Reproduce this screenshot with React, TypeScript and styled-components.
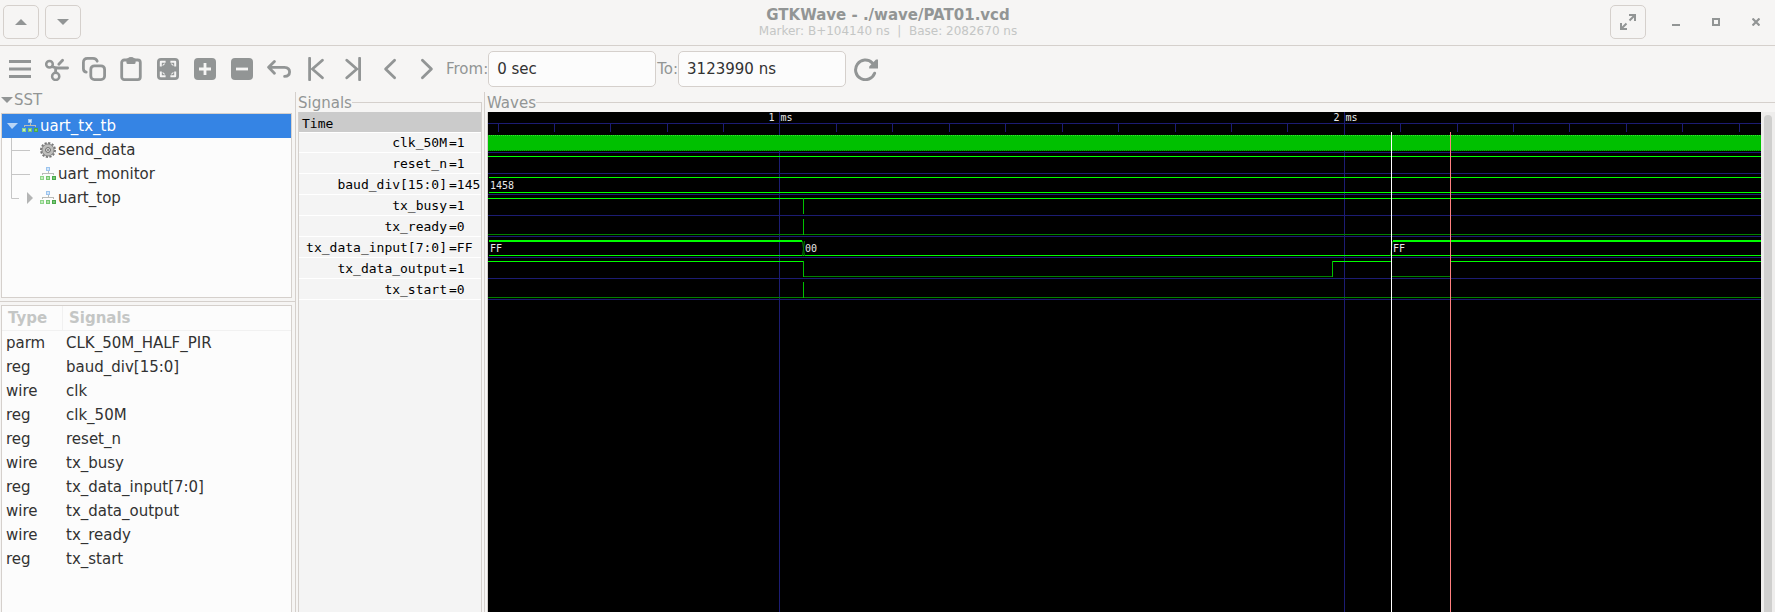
import React from "react";
import styled, { createGlobalStyle } from "styled-components";

const color = {
  bg: "#f6f5f4",
  base: "#fcfcfc",
  border: "#d5d0cc",
  muted: "#929595",
  faint: "#c4c6c5",
  text: "#323232",
  select: "#3584e4",
  navy: "#1c1c73",
  high: "#00ff00",
  edge: "#00c000",
  low: "#008000",
};

const GlobalStyle = createGlobalStyle`
  * { box-sizing: border-box; }
  body {
    margin: 0;
    background: ${color.bg};
    color: ${color.text};
    font: 15px/24px "DejaVu Sans", sans-serif;
  }
  button, input { font: inherit; }
`;

const Window = styled.div`
  min-height: 100vh;
  display: flex;
  flex-direction: column;
`;

/* ---------- title bar ---------- */

const TitleBar = styled.header`
  display: grid;
  grid-template-columns: 1fr auto 1fr;
  align-items: center;
  height: 46px;
  padding: 0 2px 1px 3px;
  border-bottom: 1px solid ${color.border};
`;

const TitleSide = styled.div<{ $end?: boolean }>`
  display: flex;
  align-items: center;
  gap: 6px;
  justify-content: ${(p) => (p.$end ? "flex-end" : "flex-start")};
`;

const Titles = styled.div`
  text-align: center;
  color: ${color.faint};
  font-size: 12px;
  line-height: 14px;
`;

const Title = styled.h1`
  margin: 0;
  color: ${color.muted};
  font-size: 15px;
  line-height: 18px;
`;

const FramedButton = styled.button`
  display: grid;
  place-items: center;
  width: 36px;
  height: 34px;
  padding: 0;
  border: 1px solid ${color.border};
  border-radius: 5px;
  background: none;
  color: ${color.muted};
`;

const WindowButton = styled(FramedButton)`
  width: 34px;
  border-color: transparent;
`;

const WindowButtons = styled.div`
  display: flex;
  gap: 6px;
  padding: 0 0 0 7px;
`;

/* ---------- tool bar ---------- */

const ToolBar = styled.div`
  display: flex;
  align-items: center;
  height: 46px;
  padding: 0 8px;
  color: ${color.muted};
`;

const ToolGroup = styled.div`
  display: flex;
  gap: 13px;
  margin-right: 7px;
`;

const ToolButton = styled.button`
  display: block;
  width: 24px;
  height: 24px;
  padding: 0;
  border: 0;
  background: none;
  color: ${color.muted};
`;

const Field = styled.label`
  display: flex;
  align-items: center;
  margin-right: 1px;
`;

const Entry = styled.input`
  width: 168px;
  height: 36px;
  padding: 0 8px;
  border: 1px solid ${color.border};
  border-radius: 5px;
  background: ${color.base};
  color: ${color.text};
  outline: none;
`;

const Reload = styled(ToolButton)`
  margin-left: 7px;
`;

/* ---------- panes ---------- */

const Panes = styled.main`
  flex: 1;
  display: flex;
  align-items: stretch;
`;

const Divider = styled.div<{ $across?: boolean }>`
  flex: none;
  background: ${color.border};
  ${(p) => (p.$across ? "height: 1px; margin: 3px 0;" : "width: 1px;")}
`;

const SidePane = styled.div`
  flex: none;
  width: 295px;
  display: flex;
  flex-direction: column;
`;

const SstToggle = styled.button`
  display: flex;
  align-items: center;
  gap: 1px;
  height: 21px;
  padding: 0 0 5px 1px;
  border: 0;
  background: none;
  color: ${color.muted};
`;

const Box = styled.div<{ $grow?: boolean }>`
  margin: 0 3px 0 1px;
  border: 1px solid ${color.border};
  background: ${color.base};
  ${(p) => (p.$grow ? "flex: 1; border-bottom: 0;" : "height: 185px;")}
`;

const TreeList = styled.ul`
  margin: 0;
  padding: 0;
  list-style: none;
`;

const TreeItem = styled.li<{ $selected?: boolean }>`
  display: flex;
  align-items: center;
  height: 24px;
  gap: 2px;
  background: ${(p) => (p.$selected ? color.select : "none")};
  color: ${(p) => (p.$selected ? "#fff" : color.text)};
`;

const SignalTable = styled.table`
  width: 100%;
  border-spacing: 0;
  table-layout: fixed;
`;

const HeadCell = styled.th<{ $width?: number }>`
  width: ${(p) => (p.$width ? `${p.$width}px` : "auto")};
  height: 25px;
  padding: 0 6px;
  border-bottom: 1px solid #f1f1f1;
  color: ${color.faint};
  text-align: left;
  & + & { border-left: 1px solid #f1f1f1; }
`;

const Cell = styled.td`
  height: 24px;
  padding: 0 4px;
`;

const Frame = styled.section<{ $width?: number }>`
  display: flex;
  flex-direction: column;
  margin: 0 2px;
  ${(p) => (p.$width ? `flex: none; width: ${p.$width}px;` : "flex: 1; min-width: 0; margin-right: 0;")}
`;

const FrameHead = styled.div`
  display: flex;
  align-items: flex-end;
  height: 20px;
  color: ${color.muted};
`;

const FrameTitle = styled.h2`
  margin: 0;
  font-size: 15px;
  font-weight: 400;
  line-height: 18px;
`;

const Rule = styled.div<{ $corner?: boolean }>`
  flex: 1;
  height: 10px;
  border-top: 1px solid ${color.border};
  border-right: ${(p) => (p.$corner ? `1px solid ${color.border}` : "0")};
`;

const SignalsBody = styled.div`
  flex: 1;
  border: solid ${color.border};
  border-width: 0 1px;
  background: #f4f4f4;
  color: #000;
  font: 13px/22px "DejaVu Sans Mono", monospace;
`;

const TimeRow = styled.div`
  height: 20px;
  padding: 0 3px;
  background: #cbcbcb;
  line-height: 24px;
`;

const SignalRows = styled.div`
  box-shadow: inset 0 1px #fff;
`;

const SignalRow = styled.div`
  display: grid;
  grid-template-columns: 148px 1fr;
  gap: 2px;
  height: 21px;
  overflow: hidden;
  border-bottom: 1px solid #fff;
  white-space: nowrap;
`;

const SignalName = styled.span`
  text-align: right;
`;

const WavesBody = styled.div`
  flex: 1;
  display: flex;
  border-left: 1px solid ${color.border};
`;

const WaveView = styled.div`
  flex: 1;
  min-width: 0;
  position: relative;
  background: #000;
`;

const WaveSvg = styled.svg`
  position: absolute;
  inset: 0;
  width: 100%;
  height: 100%;
  font: 10px "DejaVu Sans Mono", monospace;
`;

const ScrollTrack = styled.div`
  width: 14px;
  display: flex;
  padding: 3px 3px 0;
  background: #eeedec;
`;

const ScrollThumb = styled.div`
  flex: 1;
  border-radius: 4px 4px 0 0;
  background: #cfcfce;
`;

/* ---------- icons ---------- */

const Svg24 = ({ children }: { children: React.ReactNode }) => (
  <svg width="24" height="24" viewBox="0 0 24 24" fill="none" stroke="currentColor" strokeWidth="2.8" strokeLinecap="round" strokeLinejoin="round" display="block">
    {children}
  </svg>
);

const icons: [string, React.ReactNode][] = [
  ["Menu", <path d="M1 4.5H23M1 12H23M1 19.5H23" strokeLinecap="butt" />],
  [
    "Cut",
    <g strokeWidth="2.5">
      <circle cx="4.5" cy="7.3" r="3.3" />
      <circle cx="10.7" cy="19.4" r="3.6" />
      <path d="M7.5 9.8Q10 11 13 11H22.6M10.6 15.6V12.5M13.8 7.2L17.6 3.2" strokeWidth="2.8" />
    </g>,
  ],
  [
    "Copy",
    <>
      <rect x="8.8" y="8.8" width="13.8" height="13.8" rx="3.6" />
      <path d="M4.2 15.2Q1.4 14.6 1.4 11.5V5.4Q1.4 1.4 5.4 1.4H11Q14.4 1.4 15.2 4.2" />
    </>,
  ],
  [
    "Paste",
    <>
      <rect x="2.7" y="3" width="18.6" height="19.6" rx="2.6" />
      <path d="M7.4 2.2Q7.4 1.2 9 1.2Q9.6 0 12 0Q14.4 0 15 1.2Q16.6 1.2 16.6 2.2V5.4Q16.6 7 15 7H9Q7.4 7 7.4 5.4Z" fill="currentColor" stroke="none" />
    </>,
  ],
  [
    "Zoom fit",
    <>
      <rect x="1" y="1" width="22" height="22" rx="4" fill="currentColor" stroke="none" />
      <path
        d="M4.8 9.6V4.8H9.6M14.4 4.8H19.2V9.6M19.2 14.4V19.2H14.4M9.6 19.2H4.8V14.4"
        stroke={color.bg}
        strokeWidth="2"
        strokeLinecap="butt"
      />
      <path d="M6 8.6L8.6 6V7.4L7.4 8.6ZM18 8.6L15.4 6V7.4L16.6 8.6ZM6 15.4L8.6 18V16.6L7.4 15.4ZM18 15.4L15.4 18V16.6L16.6 15.4Z" fill={color.bg} stroke="none" />
    </>,
  ],
  [
    "Zoom in",
    <>
      <rect x="1" y="1" width="22" height="22" rx="4" fill="currentColor" stroke="none" />
      <path d="M12 6V18M6 12H18" stroke={color.bg} strokeLinecap="butt" />
    </>,
  ],
  [
    "Zoom out",
    <>
      <rect x="1" y="1" width="22" height="22" rx="4" fill="currentColor" stroke="none" />
      <path d="M6 12H18" stroke={color.bg} strokeLinecap="butt" />
    </>,
  ],
  ["Undo", <path d="M7.4 4.4L1.6 10.3L7.4 16.2M2 10.3H17.5Q22.6 10.6 22.6 15Q22.4 19.4 17.6 19.4" />],
  ["To start", <path d="M5.6 1.2V22.8M18.4 3.2L8.4 12L18.4 20.8" />],
  ["To end", <path d="M18.6 1.2V22.8M5.8 3.2L15.8 12L5.8 20.8" />],
  ["Back", <path d="M16.6 3.2L7.6 12L16.6 20.8" />],
  ["Forward", <path d="M7.4 3.2L16.4 12L7.4 20.8" />],
];

const ReloadIcon = () => (
  <Svg24>
    <path d="M18.2 5.8A9.8 9.8 0 1 0 20.6 16.2" strokeWidth="3" />
    <path d="M24 2.6V11.6H15.2V9.6L22 2.6Z" fill="currentColor" stroke="none" />
  </Svg24>
);

const Triangle = ({ d, fill = color.muted, w = 12, h = 6 }: { d: string; fill?: string; w?: number; h?: number }) => (
  <svg width={w} height={h} viewBox={`0 0 ${w} ${h}`} display="block">
    <path d={d} fill={fill} />
  </svg>
);

const ModuleIcon = () => (
  <svg width="16" height="16" viewBox="0 0 16 16" shapeRendering="crispEdges">
    <path d="M8 5V7M2.5 9V7.5H13.5V9" fill="none" stroke="#b9bbb8" />
    <rect x="6" y="1" width="4" height="4" fill="#9cc4ee" />
    <rect x="7" y="2" width="2" height="2" fill="#d3e5f8" />
    <rect x="0" y="10" width="4" height="4" fill="#8fd48a" />
    <rect x="1" y="11" width="2" height="2" fill="#c5ecbf" />
    <rect x="6" y="10" width="4" height="4" fill="#75c470" />
    <rect x="7" y="11" width="2" height="2" fill="#b0e3a8" />
    <rect x="12" y="10" width="4" height="4" fill="#4aa84a" />
    <rect x="13" y="11" width="2" height="2" fill="#79c878" />
  </svg>
);

const GearIcon = () => (
  <svg width="16" height="16" viewBox="0 0 16 16">
    <circle cx="8" cy="8" r="7" fill="none" stroke="#777" strokeWidth="2" strokeDasharray="2.2 1.46" />
    <circle cx="8" cy="8" r="6" fill="#bdbdbb" stroke="#858585" />
    <circle cx="8" cy="8" r="2.4" fill="#e8e8e6" stroke="#666" />
    <circle cx="8" cy="8" r="1" fill="#777" />
  </svg>
);

const Connector = ({ last }: { last?: boolean }) => (
  <svg width="36" height="24" viewBox="0 0 36 24" display="block">
    <path d={last ? "M9.5 0V12.5H17" : "M9.5 0V24M9.5 12.5H28"} fill="none" stroke="#c6c6c6" />
    {last && <path d="M25 6V18L31 12Z" fill="#b4b5b5" />}
  </svg>
);

/* ---------- data ---------- */

const tree = [
  { name: "send_data", gear: true },
  { name: "uart_monitor" },
  { name: "uart_top", last: true },
];

const declared = [
  ["parm", "CLK_50M_HALF_PIR"],
  ["reg", "baud_div[15:0]"],
  ["wire", "clk"],
  ["reg", "clk_50M"],
  ["reg", "reset_n"],
  ["wire", "tx_busy"],
  ["reg", "tx_data_input[7:0]"],
  ["wire", "tx_data_output"],
  ["wire", "tx_ready"],
  ["reg", "tx_start"],
];

const traced = [
  ["clk_50M", "1"],
  ["reset_n", "1"],
  ["baud_div[15:0]", "145"],
  ["tx_busy", "1"],
  ["tx_ready", "0"],
  ["tx_data_input[7:0]", "FF"],
  ["tx_data_output", "1"],
  ["tx_start", "0"],
];

/* ---------- waveform ---------- */

const END = "100%";
const ROW = 21;
const hiY = (row: number) => 23.5 + ROW * row;
const loY = (row: number) => 38.5 + ROW * row;

const START = 315.5;
const STOP = 844.5;
const BASE = 903.5;
const MARKER = 962.5;

const H = ({ y, from = 0, to = END, c = color.high, w = 1 }: { y: number; from?: number; to?: number | string; c?: string; w?: number }) => (
  <line x1={from} x2={to} y1={y} y2={y} stroke={c} strokeWidth={w} />
);

const V = ({ x, row }: { x: number; row: number }) => (
  <line x1={x} x2={x} y1={hiY(row) - 0.5} y2={loY(row) + 0.5} stroke={color.edge} />
);

const ticks = Array.from({ length: 60 }, (_, i) => Math.floor(10 + 56.42 * i) + 0.5).filter((_, i) => i % 10 !== 5);
const majors = [
  { x: 291.5, label: "1 ms" },
  { x: 856.5, label: "2 ms" },
];

const Waveform = () => (
  <WaveSvg role="img" aria-label="Waveforms">
    <g shapeRendering="crispEdges">
      <H y={11.5} c={color.navy} />
      {ticks.map((x) => (
        <line key={x} x1={x} x2={x} y1={11} y2={20} stroke={color.navy} />
      ))}
      {majors.map(({ x }) => (
        <line key={x} x1={x} x2={x} y1={0} y2="100%" stroke={color.navy} />
      ))}
      {traced.map(([name], row) => (
        <H key={name} y={40.5 + ROW * row} c={color.navy} />
      ))}

      <rect x="0" y="23" width="100%" height="16" fill={color.edge} />
      <line x1="1" x2="100%" y1={hiY(0)} y2={hiY(0)} stroke="#30e030" strokeDasharray="1 1" />
      <line x1="1" x2="100%" y1={loY(0)} y2={loY(0)} stroke={color.low} strokeDasharray="1 1" />

      <H y={hiY(1)} />

      <H y={hiY(2)} from={1} />
      <H y={loY(2)} from={1} />

      <H y={hiY(3)} />
      <V x={START} row={3} />

      <H y={loY(4)} c={color.low} />
      <V x={START} row={4} />

      <H y={hiY(5) + 0.5} from={1} to={314} w={2} />
      <H y={loY(5)} from={1} />
      <H y={hiY(5) + 0.5} from={905} w={2} />

      <H y={hiY(6)} to={START} />
      <V x={START} row={6} />
      <H y={loY(6)} from={START} to={STOP} c={color.low} />
      <V x={STOP} row={6} />
      <H y={hiY(6)} from={STOP} to={BASE} />
      <H y={loY(6)} from={BASE} to={MARKER} c={color.low} />
      <H y={hiY(6)} from={MARKER} />

      <H y={loY(7)} c={color.low} />
      <V x={START} row={7} />
    </g>
    <path d="M314.5 129L316.5 144M316.5 129L314.5 144M904.5 129L902.5 144" stroke={color.low} />
    <g shapeRendering="crispEdges">
      <line x1={BASE} x2={BASE} y1={20} y2="100%" stroke="#fff" />
      <line x1={MARKER} x2={MARKER} y1={20} y2="100%" stroke="#ff8080" />
    </g>
    <g fill="#e8e8e8">
      {majors.map(({ x, label }) => (
        <text key={label} x={x + 1} y={9} textAnchor="middle">{label}</text>
      ))}
      <text x="2" y="77">1458</text>
      <text x="2" y="140">FF</text>
      <text x="317" y="140">00</text>
      <text x="905" y="140">FF</text>
    </g>
  </WaveSvg>
);

export default function App() {
  return (
    <Window>
      <GlobalStyle />
      <TitleBar>
        <TitleSide>
          <FramedButton aria-label="Previous file">
            <Triangle d="M0 6L6 0L12 6Z" />
          </FramedButton>
          <FramedButton aria-label="Next file">
            <Triangle d="M0 0L6 6L12 0Z" />
          </FramedButton>
        </TitleSide>
        <Titles>
          <Title>GTKWave - ./wave/PAT01.vcd</Title>
          Marker: B+104140 ns&nbsp; |&nbsp; Base: 2082670 ns
        </Titles>
        <TitleSide $end>
          <FramedButton aria-label="Full screen">
            <svg width="16" height="16" viewBox="0 0 16 16" fill="none" stroke="currentColor" strokeWidth="2">
              <path d="M9 1H15V7M15 1L9.5 6.5M1 9V15H7M1 15L6.5 9.5" />
            </svg>
          </FramedButton>
          <WindowButtons>
            <WindowButton aria-label="Minimize">
              <svg width="8" height="8"><path d="M0 7H8" stroke="currentColor" strokeWidth="2" /></svg>
            </WindowButton>
            <WindowButton aria-label="Maximize">
              <svg width="8" height="8"><rect x="1" y="1" width="6" height="6" fill="none" stroke="currentColor" strokeWidth="2" /></svg>
            </WindowButton>
            <WindowButton aria-label="Close">
              <svg width="8" height="8"><path d="M0.5 0.5L7.5 7.5M7.5 0.5L0.5 7.5" stroke="currentColor" strokeWidth="2.2" /></svg>
            </WindowButton>
          </WindowButtons>
        </TitleSide>
      </TitleBar>

      <ToolBar>
        <ToolGroup>
          {icons.map(([label, drawing]) => (
            <ToolButton key={label} aria-label={label}>
              <Svg24>{drawing}</Svg24>
            </ToolButton>
          ))}
        </ToolGroup>
        <Field>
          From:
          <Entry defaultValue="0 sec" />
        </Field>
        <Field>
          To:
          <Entry defaultValue="3123990 ns" />
        </Field>
        <Reload aria-label="Reload">
          <ReloadIcon />
        </Reload>
      </ToolBar>

      <Panes>
        <SidePane>
          <SstToggle aria-expanded="true">
            <Triangle d="M0 0L6 6L12 0Z" />
            SST
          </SstToggle>
          <Box>
            <TreeList>
              <TreeItem $selected>
                <Triangle w={18} h={6} d="M5 0L10 6L16 0Z" fill="#b9d5f6" />
                <ModuleIcon />
                uart_tx_tb
              </TreeItem>
              {tree.map((t) => (
                <TreeItem key={t.name}>
                  <Connector last={t.last} />
                  {t.gear ? <GearIcon /> : <ModuleIcon />}
                  {t.name}
                </TreeItem>
              ))}
            </TreeList>
          </Box>
          <Divider $across />
          <Box $grow>
            <SignalTable>
              <thead>
                <tr>
                  <HeadCell $width={60}>Type</HeadCell>
                  <HeadCell>Signals</HeadCell>
                </tr>
              </thead>
              <tbody>
                {declared.map(([type, name]) => (
                  <tr key={name}>
                    <Cell>{type}</Cell>
                    <Cell>{name}</Cell>
                  </tr>
                ))}
              </tbody>
            </SignalTable>
          </Box>
        </SidePane>
        <Divider />
        <Frame $width={184}>
          <FrameHead>
            <FrameTitle>Signals</FrameTitle>
            <Rule $corner />
          </FrameHead>
          <SignalsBody>
            <TimeRow>Time</TimeRow>
            <SignalRows>
              {traced.map(([name, value]) => (
                <SignalRow key={name}>
                  <SignalName>{name}</SignalName>
                  <span>={value}</span>
                </SignalRow>
              ))}
            </SignalRows>
          </SignalsBody>
        </Frame>
        <Divider />
        <Frame>
          <FrameHead>
            <FrameTitle>Waves</FrameTitle>
            <Rule />
          </FrameHead>
          <WavesBody>
            <WaveView>
              <Waveform />
            </WaveView>
            <ScrollTrack>
              <ScrollThumb />
            </ScrollTrack>
          </WavesBody>
        </Frame>
      </Panes>
    </Window>
  );
}
